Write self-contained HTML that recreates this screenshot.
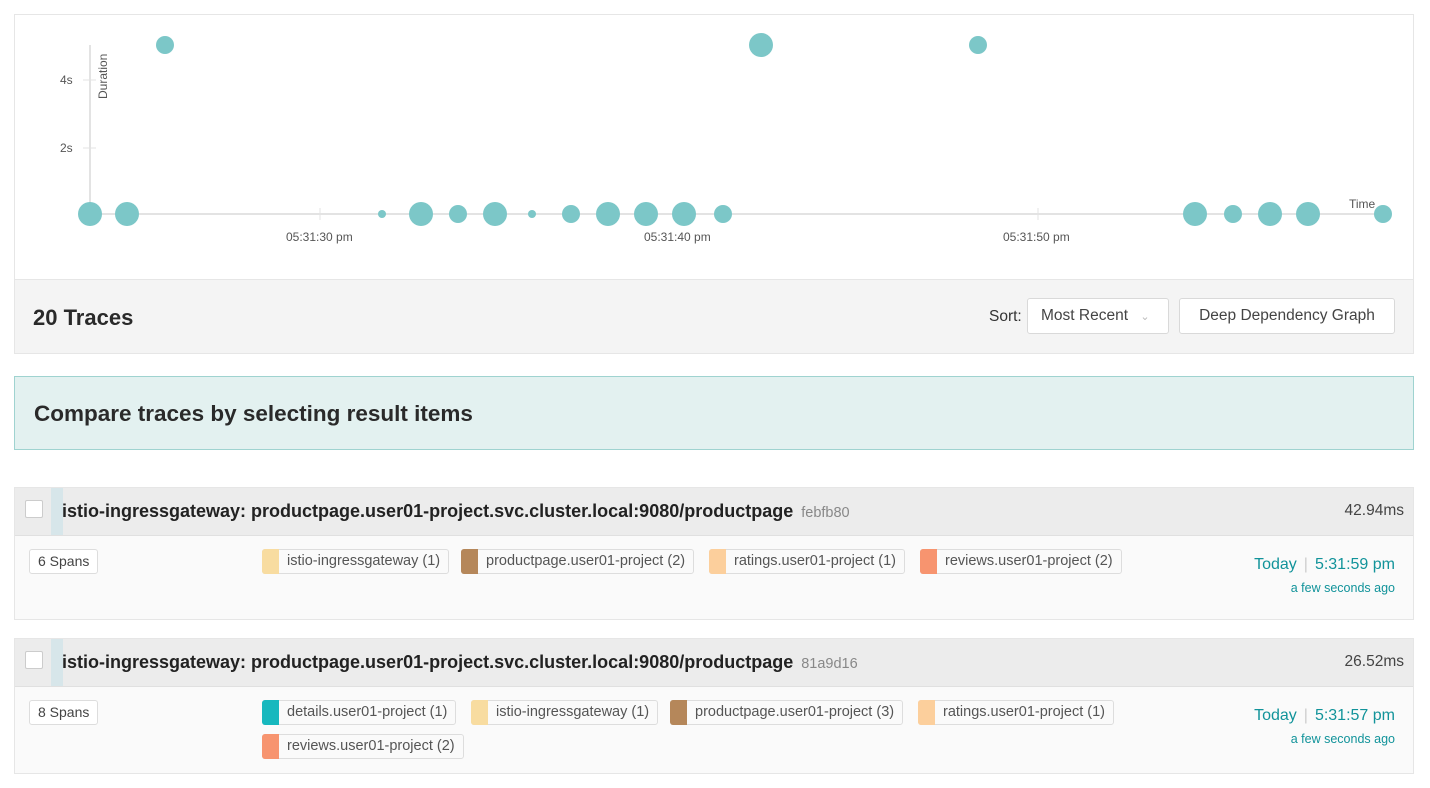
<!DOCTYPE html>
<html><head><meta charset="utf-8"><style>
*{box-sizing:border-box;margin:0;padding:0}
body{width:1430px;height:788px;background:#fff;font-family:"Liberation Sans",sans-serif;position:relative;overflow:hidden;color:#222}
.abs{position:absolute}
.chart{left:14px;top:14px;width:1400px;height:266px;border:1px solid #e6e6e6;border-bottom:none}
.bar{left:14px;top:279px;width:1400px;height:75px;background:#f4f4f4;border:1px solid #e6e6e6}
.btn{position:absolute;background:#fff;border:1px solid #d9d9d9;border-radius:3px;font-size:15.5px;color:#444;line-height:34px}
.cmp{left:14px;top:376px;width:1400px;height:74px;background:#e3f1f0;border:1px solid #9fd3d0;font-size:22.5px;font-weight:bold;padding:24px 0 0 19px;color:#2a2a2a}
.item{left:14px;width:1400px;border:1px solid #e6e6e6;background:#fafafa}
.hd{height:48px;background:#ececec;border-bottom:1px solid #e0e0e0;position:relative}
.hd .stripe{position:absolute;left:36px;top:0;width:12px;height:47px;background:#d7e6ea}
.hd .cb{position:absolute;left:10px;top:12px;width:18px;height:18px;background:#fff;border:1px solid #ccc;border-radius:2px}
.hd .t{position:absolute;left:47px;top:13px;font-size:18px;font-weight:bold;color:#222;white-space:nowrap}
.hd .t small{font-size:14.5px;font-weight:normal;color:#888;margin-left:8px}
.hd .d{position:absolute;right:9px;top:14px;font-size:15.5px;color:#444}
.sp{position:absolute;left:14px;height:25px;border:1px solid #ddd;border-radius:3px;background:#fff;font-size:14px;color:#444;padding:0 8px;line-height:23px}
.tag{position:absolute;height:25px;border:1px solid #ddd;border-radius:3px;background:#fafafa;font-size:14.5px;color:#555;line-height:23px;padding:0 8px 0 24px;white-space:nowrap}
.tag i{position:absolute;left:-1px;top:-1px;width:17px;height:25px;border-radius:3px 0 0 3px}
.tm{position:absolute;right:18px;font-size:16px;color:#11939a;text-align:right}
.tm .sep{color:#ccc;margin:0 7px}
.tm .ago{font-size:12.5px;margin-top:7px}
</style></head><body>
<div class="abs chart"></div>
<svg class="abs" style="left:0;top:0" width="1430" height="280">
<g stroke="#e3e3e3" stroke-width="2"><line x1="90" y1="45" x2="90" y2="215"/><line x1="90" y1="214" x2="1383" y2="214"/></g>
<g stroke="#e3e3e3" stroke-width="1"><line x1="83" y1="80" x2="96" y2="80"/><line x1="83" y1="148" x2="96" y2="148"/><line x1="320" y1="208" x2="320" y2="220"/><line x1="679" y1="208" x2="679" y2="220"/><line x1="1038" y1="208" x2="1038" y2="220"/></g>
<g font-family="Liberation Sans" font-size="12" fill="#555">
<text x="60" y="84">4s</text><text x="60" y="152">2s</text>
<text x="286" y="241">05:31:30 pm</text><text x="644" y="241">05:31:40 pm</text><text x="1003" y="241">05:31:50 pm</text>
<text x="1349" y="208">Time</text>
<text transform="translate(107,99) rotate(-90)">Duration</text>
</g>
<g fill="#7cc7c8">
<circle cx="165" cy="45" r="9"/><circle cx="761" cy="45" r="12"/><circle cx="978" cy="45" r="9"/>
<circle cx="90" cy="214" r="12"/><circle cx="127" cy="214" r="12"/><circle cx="382" cy="214" r="4"/><circle cx="421" cy="214" r="12"/><circle cx="458" cy="214" r="9"/><circle cx="495" cy="214" r="12"/><circle cx="532" cy="214" r="4"/><circle cx="571" cy="214" r="9"/><circle cx="608" cy="214" r="12"/><circle cx="646" cy="214" r="12"/><circle cx="684" cy="214" r="12"/><circle cx="723" cy="214" r="9"/><circle cx="1195" cy="214" r="12"/><circle cx="1233" cy="214" r="9"/><circle cx="1270" cy="214" r="12"/><circle cx="1308" cy="214" r="12"/><circle cx="1383" cy="214" r="9"/>
</g>
</svg>
<div class="abs bar">
<div class="abs" style="left:18px;top:25px;font-size:22px;font-weight:bold;color:#2a2a2a">20 Traces</div>
<div class="abs" style="left:974px;top:28px;font-size:15.5px;color:#333">Sort:</div>
<div class="btn" style="left:1012px;top:18px;width:142px;height:36px;padding-left:13px">Most Recent <span style="color:#bbb;font-size:11px;margin-left:8px">&#8964;</span></div>
<div class="btn" style="left:1164px;top:18px;width:216px;height:36px;text-align:center">Deep Dependency Graph</div>
</div>
<div class="abs cmp">Compare traces by selecting result items</div>

<div class="abs item" style="top:487px;height:133px">
<div class="hd"><div class="stripe"></div><div class="cb"></div><div class="t">istio-ingressgateway: productpage.user01-project.svc.cluster.local:9080/productpage<small>febfb80</small></div><div class="d">42.94ms</div></div>
<div class="sp" style="top:61px">6 Spans</div>
<div class="tag" style="left:247px;top:61px"><i style="background:#f8dca0"></i>istio-ingressgateway (1)</div>
<div class="tag" style="left:446px;top:61px"><i style="background:#b5875a"></i>productpage.user01-project (2)</div>
<div class="tag" style="left:694px;top:61px"><i style="background:#fccf9c"></i>ratings.user01-project (1)</div>
<div class="tag" style="left:905px;top:61px"><i style="background:#f7946f"></i>reviews.user01-project (2)</div>
<div class="tm" style="top:68px">Today<span class="sep">|</span>5:31:59 pm<div class="ago">a few seconds ago</div></div>
</div>

<div class="abs item" style="top:638px;height:136px">
<div class="hd"><div class="stripe"></div><div class="cb"></div><div class="t">istio-ingressgateway: productpage.user01-project.svc.cluster.local:9080/productpage<small>81a9d16</small></div><div class="d">26.52ms</div></div>
<div class="sp" style="top:61px">8 Spans</div>
<div class="tag" style="left:247px;top:61px"><i style="background:#17b8be"></i>details.user01-project (1)</div>
<div class="tag" style="left:456px;top:61px"><i style="background:#f8dca0"></i>istio-ingressgateway (1)</div>
<div class="tag" style="left:655px;top:61px"><i style="background:#b5875a"></i>productpage.user01-project (3)</div>
<div class="tag" style="left:903px;top:61px"><i style="background:#fccf9c"></i>ratings.user01-project (1)</div>
<div class="tag" style="left:247px;top:95px"><i style="background:#f7946f"></i>reviews.user01-project (2)</div>
<div class="tm" style="top:68px">Today<span class="sep">|</span>5:31:57 pm<div class="ago">a few seconds ago</div></div>
</div>
</body></html>
